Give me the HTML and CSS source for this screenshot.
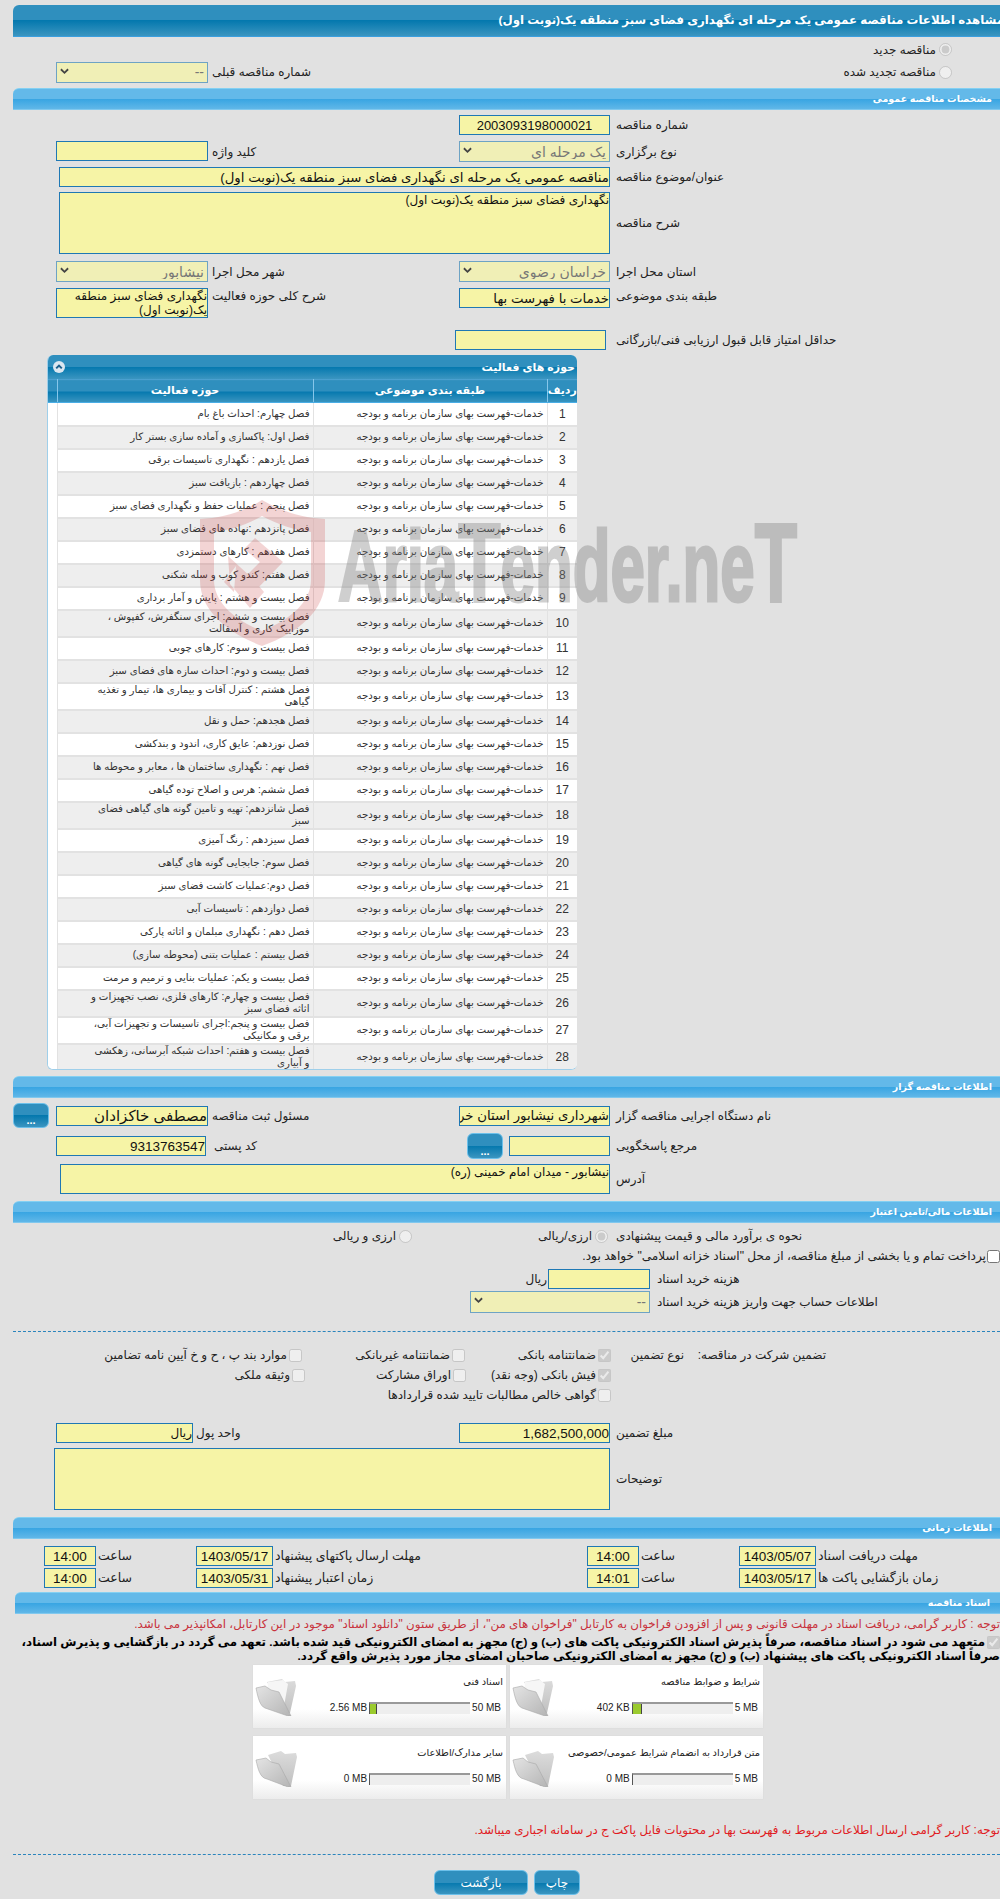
FILE: index.html
```html
<!DOCTYPE html>
<html lang="fa" dir="rtl">
<head>
<meta charset="utf-8">
<title>مشاهده اطلاعات مناقصه</title>
<link rel="stylesheet" href="styles.css">
</head>
<body>
<div class="page">
  <h1 class="title"><span>مشاهده اطلاعات مناقصه عمومی یک مرحله ای نگهداری فضای سبز منطقه یک(نوبت اول)</span></h1>

  <div class="opt-a"><label class="radio"><input type="radio" name="n" checked disabled>مناقصه جدید</label></div>
  <div class="grid opt-b">
    <div class="sel a w152"><select disabled><option>--</option></select><svg class="chev" viewBox="0 0 10 7"><path d="M1 1l4 4 4-4" fill="none" stroke="#444" stroke-width="2"/></svg></div>
    <span class="lbl b">شماره مناقصه قبلی</span>
    <label class="radio c-radio"><input type="radio" name="n" disabled>مناقصه تجدید شده</label>
  </div>

  <h2 class="sec s1">مشخصات مناقصه عمومی</h2>

  <div class="grid r h20 mt5">
    <input class="c" type="text" value="2003093198000021" dir="ltr" readonly>
    <span class="lbl d">شماره مناقصه</span>
  </div>
  <div class="grid r h21 mt6">
    <input class="a w152 top" type="text" readonly>
    <span class="lbl b">کلید واژه</span>
    <div class="sel c"><select disabled><option>یک مرحله ای</option></select><svg class="chev" viewBox="0 0 10 7"><path d="M1 1l4 4 4-4" fill="none" stroke="#444" stroke-width="2"/></svg></div>
    <span class="lbl d">نوع برگزاری</span>
  </div>
  <div class="grid r h20 mt5">
    <input class="wide big" type="text" value="مناقصه عمومی یک مرحله ای نگهداری فضای سبز منطقه یک(نوبت اول)" readonly>
    <span class="lbl d">عنوان/موضوع مناقصه</span>
  </div>
  <div class="grid r h62 mt5">
    <textarea class="wide" readonly>نگهداری فضای سبز منطقه یک(نوبت اول)</textarea>
    <span class="lbl d">شرح مناقصه</span>
  </div>
  <div class="grid r h21 mt7">
    <div class="sel a w152"><select disabled><option>نیشابور</option></select><svg class="chev" viewBox="0 0 10 7"><path d="M1 1l4 4 4-4" fill="none" stroke="#444" stroke-width="2"/></svg></div>
    <span class="lbl b">شهر محل اجرا</span>
    <div class="sel c"><select disabled><option>خراسان رضوی</option></select><svg class="chev" viewBox="0 0 10 7"><path d="M1 1l4 4 4-4" fill="none" stroke="#444" stroke-width="2"/></svg></div>
    <span class="lbl d">استان محل اجرا</span>
  </div>
  <div class="grid r h30 mt6 align-top">
    <textarea class="a w152 h30" readonly>نگهداری فضای سبز منطقه یک(نوبت اول)</textarea>
    <span class="lbl b top-lbl">شرح کلی حوزه فعالیت</span>
    <input class="c big" type="text" value="خدمات با فهرست بها" readonly>
    <span class="lbl d top-lbl">طبقه بندی موضوعی</span>
  </div>
  <div class="grid r h20 mt12">
    <input class="c shift" type="text" readonly>
    <span class="lbl d">حداقل امتیاز قابل قبول ارزیابی فنی/بازرگانی</span>
  </div>

  <section class="panel">
    <div class="panel-head">
      <span>حوزه های فعالیت</span>
      <svg class="toggle" viewBox="0 0 12 12"><circle cx="6" cy="6" r="6" fill="#dbe6f0"/><path d="M3.2 7.4L6 4.6l2.8 2.8" fill="none" stroke="#1c5f8c" stroke-width="2"/></svg>
    </div>
    <table class="list">
      <colgroup><col class="c1"><col class="c2"><col class="c3"><col class="c4"></colgroup>
      <thead><tr><th>ردیف</th><th>طبقه بندی موضوعی</th><th>حوزه فعالیت</th><th></th></tr></thead>
      <tbody>
        <tr><td class="n">1</td><td>خدمات-فهرست بهای سازمان برنامه و بودجه</td><td>فصل چهارم: احداث باغ بام</td><td class="e"></td></tr>
        <tr><td class="n">2</td><td>خدمات-فهرست بهای سازمان برنامه و بودجه</td><td>فصل اول:  پاکسازی و آماده سازی بستر کار</td><td class="e"></td></tr>
        <tr><td class="n">3</td><td>خدمات-فهرست بهای سازمان برنامه و بودجه</td><td>فصل یازدهم : نگهداری تاسیسات برقی</td><td class="e"></td></tr>
        <tr><td class="n">4</td><td>خدمات-فهرست بهای سازمان برنامه و بودجه</td><td>فصل چهاردهم : بازیافت سبز</td><td class="e"></td></tr>
        <tr><td class="n">5</td><td>خدمات-فهرست بهای سازمان برنامه و بودجه</td><td>فصل پنجم : عملیات حفظ و نگهداری فضای سبز</td><td class="e"></td></tr>
        <tr><td class="n">6</td><td>خدمات-فهرست بهای سازمان برنامه و بودجه</td><td>فصل پانزدهم :نهاده های فضای سبز</td><td class="e"></td></tr>
        <tr><td class="n">7</td><td>خدمات-فهرست بهای سازمان برنامه و بودجه</td><td>فصل هفدهم : کارهای دستمزدی</td><td class="e"></td></tr>
        <tr><td class="n">8</td><td>خدمات-فهرست بهای سازمان برنامه و بودجه</td><td>فصل هفتم: کندو کوب و سله شکنی</td><td class="e"></td></tr>
        <tr><td class="n">9</td><td>خدمات-فهرست بهای سازمان برنامه و بودجه</td><td>فصل بیست و هشتم : پایش و آمار برداری</td><td class="e"></td></tr>
        <tr class="tall"><td class="n">10</td><td>خدمات-فهرست بهای سازمان برنامه و بودجه</td><td>فصل بیست و ششم: اجرای سنگفرش، کفپوش ،<br>موزاییک کاری و آسفالت</td><td class="e"></td></tr>
        <tr><td class="n">11</td><td>خدمات-فهرست بهای سازمان برنامه و بودجه</td><td>فصل بیست و سوم: کارهای چوبی</td><td class="e"></td></tr>
        <tr><td class="n">12</td><td>خدمات-فهرست بهای سازمان برنامه و بودجه</td><td>فصل بیست و دوم: احداث سازه های فضای سبز</td><td class="e"></td></tr>
        <tr class="tall"><td class="n">13</td><td>خدمات-فهرست بهای سازمان برنامه و بودجه</td><td>فصل هشتم : کنترل آفات و بیماری ها، تیمار و تغذیه<br>گیاهی</td><td class="e"></td></tr>
        <tr><td class="n">14</td><td>خدمات-فهرست بهای سازمان برنامه و بودجه</td><td>فصل هجدهم: حمل و نقل</td><td class="e"></td></tr>
        <tr><td class="n">15</td><td>خدمات-فهرست بهای سازمان برنامه و بودجه</td><td>فصل نوزدهم: عایق کاری، اندود و بندکشی</td><td class="e"></td></tr>
        <tr><td class="n">16</td><td>خدمات-فهرست بهای سازمان برنامه و بودجه</td><td>فصل نهم : نگهداری ساختمان ها ، معابر و محوطه ها</td><td class="e"></td></tr>
        <tr><td class="n">17</td><td>خدمات-فهرست بهای سازمان برنامه و بودجه</td><td>فصل ششم: هرس و اصلاح توده گیاهی</td><td class="e"></td></tr>
        <tr class="tall"><td class="n">18</td><td>خدمات-فهرست بهای سازمان برنامه و بودجه</td><td>فصل شانزدهم: تهیه و تامین گونه های گیاهی فضای<br>سبز</td><td class="e"></td></tr>
        <tr><td class="n">19</td><td>خدمات-فهرست بهای سازمان برنامه و بودجه</td><td>فصل سیزدهم : رنگ آمیزی</td><td class="e"></td></tr>
        <tr><td class="n">20</td><td>خدمات-فهرست بهای سازمان برنامه و بودجه</td><td>فصل سوم: جابجایی گونه های گیاهی</td><td class="e"></td></tr>
        <tr><td class="n">21</td><td>خدمات-فهرست بهای سازمان برنامه و بودجه</td><td>فصل دوم:عملیات کاشت فضای سبز</td><td class="e"></td></tr>
        <tr><td class="n">22</td><td>خدمات-فهرست بهای سازمان برنامه و بودجه</td><td>فصل دوازدهم : تاسیسات آبی</td><td class="e"></td></tr>
        <tr><td class="n">23</td><td>خدمات-فهرست بهای سازمان برنامه و بودجه</td><td>فصل دهم : نگهداری مبلمان و اثاثه پارکی</td><td class="e"></td></tr>
        <tr><td class="n">24</td><td>خدمات-فهرست بهای سازمان برنامه و بودجه</td><td>فصل بیستم : عملیات بتنی (محوطه سازی)</td><td class="e"></td></tr>
        <tr><td class="n">25</td><td>خدمات-فهرست بهای سازمان برنامه و بودجه</td><td>فصل بیست و یکم: عملیات بنایی و ترمیم و مرمت</td><td class="e"></td></tr>
        <tr class="tall"><td class="n">26</td><td>خدمات-فهرست بهای سازمان برنامه و بودجه</td><td>فصل بیست و چهارم: کارهای فلزی، نصب تجهیزات و<br>اثاثه فضای سبز</td><td class="e"></td></tr>
        <tr class="tall"><td class="n">27</td><td>خدمات-فهرست بهای سازمان برنامه و بودجه</td><td>فصل بیست و پنجم:اجرای تاسیسات و تجهیزات آبی،<br>برقی و مکانیکی</td><td class="e"></td></tr>
        <tr class="tall"><td class="n">28</td><td>خدمات-فهرست بهای سازمان برنامه و بودجه</td><td>فصل بیست و هفتم: احداث شبکه آبرسانی، زهکشی<br>و آبیاری</td><td class="e"></td></tr>
      </tbody>
    </table>
  </section>

  <h2 class="sec mt6">اطلاعات مناقصه گزار</h2>
  <div class="grid r h25 mt5">
    <div class="a with-btn"><button class="dots" type="button">...</button><input class="w152 person" type="text" value="مصطفی خاکزادان" readonly></div>
    <span class="lbl b">مسئول ثبت مناقصه</span>
    <input class="c big" type="text" value="شهرداری نیشابور استان خراسان رضوی" readonly>
    <span class="lbl d">نام دستگاه اجرایی مناقصه گزار</span>
  </div>
  <div class="grid r h26 mt5">
    <input class="a w150 num" type="text" value="9313763547" readonly>
    <span class="lbl b pad">کد پستی</span>
    <div class="c with-btn2"><button class="dots" type="button">...</button><input type="text" readonly></div>
    <span class="lbl d">مرجع پاسخگویی</span>
  </div>
  <div class="grid r h30 mt5">
    <textarea class="wide2 h30" readonly>نیشابور - میدان امام خمینی (ره)</textarea>
    <span class="lbl d">آدرس</span>
  </div>

  <h2 class="sec mt7">اطلاعات مالی/تامین اعتبار</h2>
  <div class="fin-radio">
    <div class="fin-opts">
      <label class="radio w196"><input type="radio" name="f" checked disabled>ارزی/ریالی</label>
      <label class="radio"><input type="radio" name="f" disabled>ارزی و ریالی</label>
    </div>
    <span class="lbl">نحوه ی برآورد مالی و قیمت پیشنهادی</span>
  </div>
  <label class="pay"><input type="checkbox">پرداخت تمام و یا بخشی از مبلغ مناقصه، از محل "اسناد خزانه اسلامی" خواهد بود.</label>
  <div class="fin r h20 mt3">
    <span class="rial">ریال</span>
    <input class="fee" type="text" readonly>
    <span class="lbl">هزینه خرید اسناد</span>
  </div>
  <div class="fin r h22 mt2">
    <div class="sel acc"><select disabled><option>--</option></select><svg class="chev" viewBox="0 0 10 7"><path d="M1 1l4 4 4-4" fill="none" stroke="#444" stroke-width="2"/></svg></div>
    <span class="lbl">اطلاعات حساب جهت واریز هزینه خرید اسناد</span>
  </div>
  <hr class="dash d1">

  <div class="g-row mt13">
    <span class="g-lbl">تضمین شرکت در مناقصه:</span>
    <span class="g-type">نوع تضمین</span>
    <label class="chk g1"><input type="checkbox" checked disabled>ضمانتنامه بانکی</label>
    <label class="chk g2"><input type="checkbox" disabled>ضمانتنامه غیربانکی</label>
    <label class="chk"><input type="checkbox" disabled>موارد بند پ ، ح و خ آیین نامه تضامین</label>
  </div>
  <div class="g-row">
    <span class="g-pad"></span>
    <label class="chk g1b"><input type="checkbox" checked disabled>فیش بانکی (وجه نقد)</label>
    <label class="chk g2b"><input type="checkbox" disabled>اوراق مشارکت</label>
    <label class="chk"><input type="checkbox" disabled>وثیقه ملکی</label>
  </div>
  <div class="g-row">
    <span class="g-pad"></span>
    <label class="chk"><input type="checkbox" disabled>گواهی خالص مطالبات تایید شده قراردادها</label>
  </div>

  <div class="grid r h20 mt18">
    <input class="a w137" type="text" value="ریال" readonly>
    <span class="lbl b tight">واحد پول</span>
    <input class="c num" type="text" value="1,682,500,000" dir="ltr" readonly>
    <span class="lbl d">مبلغ تضمین</span>
  </div>
  <div class="grid r h62 mt5">
    <textarea class="wide3" readonly></textarea>
    <span class="lbl d">توضیحات</span>
  </div>

  <h2 class="sec mt7">اطلاعات زمانی</h2>
  <div class="dates mt7">
    <input class="num" type="text" value="14:00" dir="ltr" readonly><span class="lbl">ساعت</span>
    <input class="num" type="text" value="1403/05/17" dir="ltr" readonly><span class="lbl">مهلت ارسال پاکتهای پیشنهاد</span>
    <input class="num" type="text" value="14:00" dir="ltr" readonly><span class="lbl">ساعت</span>
    <input class="num" type="text" value="1403/05/07" dir="ltr" readonly><span class="lbl">مهلت دریافت اسناد</span>
  </div>
  <div class="dates mt2">
    <input class="num" type="text" value="14:00" dir="ltr" readonly><span class="lbl">ساعت</span>
    <input class="num" type="text" value="1403/05/31" dir="ltr" readonly><span class="lbl">زمان اعتبار پیشنهاد</span>
    <input class="num" type="text" value="14:01" dir="ltr" readonly><span class="lbl">ساعت</span>
    <input class="num" type="text" value="1403/05/17" dir="ltr" readonly><span class="lbl">زمان بازگشایی پاکت ها</span>
  </div>

  <h2 class="sec sec-in mt4">اسناد مناقصه</h2>
  <p class="note-red">توجه : کاربر گرامی، دریافت اسناد در مهلت قانونی و پس از افزودن فراخوان به کارتابل "فراخوان های من"، از طریق ستون "دانلود اسناد" موجود در این کارتابل، امکانپذیر می باشد.</p>
  <p class="commit"><input type="checkbox" checked disabled>متعهد می شود در اسناد مناقصه، صرفاً پذیرش اسناد الکترونیکی پاکت های (ب) و (ج) مجهز به امضای الکترونیکی قید شده باشد. تعهد می گردد در بازگشایی و پذیرش اسناد،<br>صرفاً اسناد الکترونیکی پاکت های پیشنهاد (ب) و (ج) مجهز به امضای الکترونیکی صاحبان امضای مجاز مورد پذیرش واقع گردد.</p>

  <div class="cards">
    <article class="card">
      <div class="card-main">
        <div class="card-title">شرایط و ضوابط مناقصه</div>
        <div class="prog"><span dir="ltr">5 MB</span><span class="bar"><i style="width:9px"></i></span><span dir="ltr">402 KB</span></div>
      </div>
      <svg class="folder" viewBox="0 0 42 38"><use href="#folder"/></svg>
    </article>
    <article class="card">
      <div class="card-main">
        <div class="card-title">اسناد فنی</div>
        <div class="prog"><span dir="ltr">50 MB</span><span class="bar"><i style="width:7px"></i></span><span dir="ltr">2.56 MB</span></div>
      </div>
      <svg class="folder" viewBox="0 0 42 38"><use href="#folder"/></svg>
    </article>
    <article class="card">
      <div class="card-main">
        <div class="card-title">متن قرارداد به انضمام شرایط عمومی/خصوصی</div>
        <div class="prog"><span dir="ltr">5 MB</span><span class="bar"></span><span dir="ltr">0 MB</span></div>
      </div>
      <svg class="folder" viewBox="0 0 42 38"><use href="#folder2"/></svg>
    </article>
    <article class="card">
      <div class="card-main">
        <div class="card-title">سایر مدارک/اطلاعات</div>
        <div class="prog"><span dir="ltr">50 MB</span><span class="bar"></span><span dir="ltr">0 MB</span></div>
      </div>
      <svg class="folder" viewBox="0 0 42 38"><use href="#folder2"/></svg>
    </article>
  </div>

  <p class="note-red2">توجه: کاربر گرامی ارسال اطلاعات مربوط به فهرست بها در محتویات فایل پاکت ج در سامانه اجباری میباشد.</p>
  <hr class="dash d2">
  <div class="actions">
    <button class="act print" type="button">چاپ</button>
    <button class="act back" type="button">بازگشت</button>
  </div>
</div>

<div class="wm" aria-hidden="true">
  <svg class="wm-shield" viewBox="0 0 125 146">
    <path fill="#cc4040" fill-rule="evenodd" d="M62 0C82 12 104 18 125 19V80C125 110 100 132 62 146C26 132 0 110 0 80V19C22 18 43 12 62 0ZM62 16C46 25 30 30 14 32V80C14 102 34 120 62 131C90 120 111 102 111 80V32C95 30 79 25 62 16Z"/>
    <path fill="#cc4040" d="M55 38L83 62 56 90 44 78 60 62 44 49ZM28 56L52 78 64 92 50 108 40 96 30 84ZM36 66L24 82 34 92Z"/>
  </svg>
  <span class="wm-text">Aria<b>T</b>ender.ne<b>T</b></span>
</div>

<svg class="defs" width="0" height="0">
  <defs>
    <linearGradient id="fg" x1="0" y1="0" x2="1" y2="1"><stop offset="0" stop-color="#e4e4e4"/><stop offset="1" stop-color="#b4b4b4"/></linearGradient>
    <linearGradient id="bk" x1="0" y1="0" x2="0" y2="1"><stop offset="0" stop-color="#dcdcdc"/><stop offset="1" stop-color="#c0c0c0"/></linearGradient>
    <g id="folder">
      <path fill="url(#bk)" d="M12 4L27 1l3 3 10-1 1 5-6 27-4 0Z"/>
      <path fill="#f6f6f6" d="M13 4l15-2 5 4-4 22-8-10-9-2Z"/>
      <path fill="url(#fg)" stroke="#a8a8a8" stroke-width=".6" d="M1 10l9-2 6 4 8 2 12 24-1 0-2 0-23-8C5 28 3 20 1 10Z"/>
    </g>
    <g id="folder2">
      <path fill="url(#bk)" d="M13 6L26 2l4 3 11-1 1 4-6 29-8 0Z"/>
      <path fill="url(#fg)" stroke="#a8a8a8" stroke-width=".6" d="M1 11l10-2 5 4 8 2 12 23-3 0-21-8C5 29 3 20 1 11Z"/>
    </g>
  </defs>
</svg>
</body>
</html>
```
FILE: styles.css
```css
* { box-sizing: border-box; }
html, body { margin: 0; padding: 0; }
html { overflow: hidden; }
body {
  position: relative;
  width: 1000px;
  height: 1899px;
  overflow: hidden;
  background: #e1e1e1;
  color: #222;
  direction: rtl;
  font: 12px/14px "Liberation Sans", "DejaVu Sans", sans-serif;
}
.page { padding: 5px 0 0 13px; }

/* headings */
.title {
  margin: 0;
  height: 32px;
  overflow: hidden;
  border-radius: 6px 0 0 0;
  border-bottom: 1px solid #3a9fdf;
  background: linear-gradient(#2f8fbe 0, #2f8fbe 50%, #0478ae 50%, #3b95c0 100%);
  color: #fff;
  font-size: 11.8px;
  line-height: 31px;
  font-weight: bold;
  white-space: nowrap;
}
.title span { display: block; margin-right: -4px; }
.sec {
  margin: 0;
  height: 22px;
  padding-right: 8px;
  border-radius: 6px 0 0 0;
  border-top: 1px solid #84d0f2;
  border-bottom: 1px solid #80c8ee;
  background: linear-gradient(#63b9e9 0, #63b9e9 48%, #36a4e2 48%, #60b7e8 100%);
  color: #fff;
  font-size: 9.5px;
  line-height: 20px;
  font-weight: bold;
}
.s1 { margin-top: 5px; }
.sec-in { margin-left: 2px; padding-right: 10px; }

/* spacing */
.mt2 { margin-top: 2px; } .mt3 { margin-top: 3px; } .mt4 { margin-top: 4px; }
.mt5 { margin-top: 5px; } .mt6 { margin-top: 6px; } .mt7 { margin-top: 7px; }
.mt12 { margin-top: 12px; } .mt13 { margin-top: 13px; } .mt18 { margin-top: 18px; }
.h20 { height: 20px; } .h21 { height: 21px; } .h22 { height: 22px; } .h25 { height: 25px; }
.h26 { height: 26px; } .h30 { height: 30px; } .h62 { height: 62px; }

/* form controls */
input[type=text], textarea, select {
  margin: 0;
  padding: 0;
  border: 1px solid #1f78b4;
  border-radius: 0;
  background: #f6f4a6;
  color: #111;
  font: 12px/14px "Liberation Sans", "DejaVu Sans", sans-serif;
  outline: 0;
  resize: none;
  overflow: hidden;
}
input[type=text] { height: 20px; }
textarea { display: block; }
input[type=text].big { font-size: 13.3px; }
input[type=text].person { font-size: 15px; }
input[type=text].num { font-size: 13.5px; }
select {
  appearance: none;
  width: 100%;
  height: 100%;
  padding: 0 3px;
  border-color: #6ea3c4;
  background: #f0efb6;
  color: #777;
  font-size: 14px;
  opacity: 1;
}
.sel { position: relative; height: 21px; }
.chev { position: absolute; left: 4px; top: 6px; width: 9px; height: 7px; }
input[dir=ltr] { text-align: right; }
input[value="2003093198000021"] { text-align: center; font-size: 13px; }
input[type=radio], input[type=checkbox] { margin: 0; }

/* grid of the main form */
.grid {
  display: grid;
  grid-template-columns: 199px 247px 157px 1fr;
  grid-template-rows: 1fr;
  direction: ltr;
  align-items: center;
}
.grid > * { grid-row: 1; }
.grid .lbl, .fin .lbl, .dates .lbl, .fin-radio .lbl { direction: rtl; text-align: left; white-space: nowrap; }
.grid .a { grid-column: 1; justify-self: end; margin-right: 4px; direction: rtl; }
.grid .b { grid-column: 2; }
.grid .c { grid-column: 3; width: 151px; direction: rtl; }
.grid .d { grid-column: 4; }
.w152 { width: 152px; }
.w150 { width: 150px; margin-right: 6px !important; }
.w137 { width: 137px; margin-right: 19px !important; }
.pad { padding-left: 2px; }
.grid .tight { margin-left: -16px; }
.grid .wide { grid-column: 1 / 4; margin: 0 6px 0 46px; width: 551px; direction: rtl; height: 100%; }
.grid .wide2 { grid-column: 1 / 4; margin: 0 6px 0 47px; width: 550px; direction: rtl; }
.grid .wide3 { grid-column: 1 / 4; margin: 0 6px 0 41px; width: 556px; direction: rtl; height: 100%; }
.align-top { align-items: start; }
.align-top .top-lbl { padding-top: 1px; }
.grid .shift { margin-left: -4px; }
.top { align-self: start; }
.opt-a { height: 19px; margin-top: 3px; padding-right: 48px; display: flex; align-items: center; }
.opt-b { height: 22px; margin-top: 2px; }
.grid .c-radio { grid-column: 3 / 5; direction: rtl; justify-self: end; margin-right: 48px; }
.radio, .chk { display: inline-flex; align-items: center; gap: 3px; white-space: nowrap; }
.chk { gap: 2px; }
.grid .with-btn { display: flex; direction: ltr; justify-content: space-between; align-items: center; width: 195px; margin-right: 4px; }
.grid .with-btn2 { display: flex; direction: ltr; justify-content: space-between; align-items: center; height: 26px; margin-left: 8px; width: 143px; }
.with-btn input { direction: rtl; }
.with-btn2 input { width: 101px; direction: rtl; }
.dots {
  width: 36px;
  height: 25px;
  padding: 9px 0 0;
  border: 1px solid #6cc0ea;
  border-radius: 6px;
  background: linear-gradient(#2f8fbe 0, #2f8fbe 50%, #0478ae 50%, #3b95c0 100%);
  color: #fff;
  font: bold 11px/12px "Liberation Sans", sans-serif;
}
.with-btn2 .dots { height: 26px; }

/* panel + table */
.panel {
  height: 715px;
  width: 530px;
  margin: 5px 0 0 0;
  margin-right: auto;
  margin-left: 34px;
  overflow: hidden;
  border-radius: 6px;
  border-left: 1px solid #9fcfea;
  border-bottom: 1px solid #9fcfea;
  background: #fff;
}
.panel-head {
  display: flex;
  justify-content: space-between;
  align-items: center;
  height: 24px;
  padding: 0 2px 0 5px;
  background: linear-gradient(#2f8fbe 0, #2f8fbe 50%, #0478ae 50%, #3b95c0 100%);
  color: #fff;
  font-size: 11px;
  font-weight: bold;
}
.toggle { width: 12px; height: 12px; }
.list { width: 529px; border-collapse: collapse; table-layout: fixed; }
.c1 { width: 30px; } .c2 { width: 234px; } .c3 { width: 256px; } .c4 { width: 9px; }
.list th {
  height: 23px;
  padding: 0 0 3px;
  border-left: 1px solid #86c6ea;
  border-top: 1px solid #4aa0d0;
  border-bottom: 1px solid #4aaee6;
  background: linear-gradient(#2f8fbe 0, #2f8fbe 50%, #0478ae 50%, #3b95c0 100%);
  color: #fff;
  font-size: 11px;
  font-weight: bold;
}
.list th:last-child { border-left: 0; }
.list td {
  height: 23px;
  padding: 0 3px 0 0;
  border-bottom: 2px solid #e2e2e2;
  border-left: 1px solid #e2e2e2;
  background: #fff;
  color: #333;
  font-size: 10.2px;
  line-height: 12.5px;
  white-space: nowrap;
  overflow: hidden;
}
.list tbody tr:nth-child(even) td { background: #eee; }
.list tbody tr td.e { background: #fff; border: 0; }
.list td.n { padding: 0; text-align: center; font-size: 12px; border-right: 0; }
.list tr.tall td { height: 27px; }

/* finance */
.fin-radio { display: grid; grid-template-columns: 603px 1fr; direction: ltr; height: 20px; margin-top: 3px; align-items: center; }
.fin-opts { display: flex; direction: rtl; padding-right: 8px; }
.w196 { width: 196px; }
.pay { display: flex; align-items: center; gap: 1px; height: 20px; font-size: 12.15px; }
.fin { display: grid; grid-template-columns: 535px 109px 1fr; direction: ltr; align-items: center; }
.rial { justify-self: end; direction: rtl; padding-right: 1px; }
.fee { width: 102px; }
.acc { grid-column: 1 / 3; justify-self: end; margin-right: 7px; width: 180px; height: 22px; direction: rtl; }
.fin > .lbl { grid-column: 3; }
.dash { margin: 0; border: 0; border-top: 1px dashed #2a84bc; }
.d1 { margin-top: 18px; }
.d2 { margin-top: 14px; }

/* guarantee */
.g-row { display: flex; width: 813px; margin-right: auto; margin-left: 0; height: 20px; align-items: center; white-space: nowrap; }
.g-lbl { width: 126px; }
.g-type { width: 89px; padding-right: 16px; }
.g-pad { width: 215px; flex: none; }
.g1 { width: 146px; } .g2 { width: 163px; } .g1b { width: 145px; } .g2b { width: 161px; }

/* dates */
.dates {
  display: grid;
  grid-template-columns: 52px 100px 77px 314px 52px 100px 77px 1fr;
  direction: ltr;
  height: 20px;
  padding-left: 31px;
  align-items: center;
}
.dates input { width: 100%; text-align: center !important; }
.dates .lbl { padding-left: 2px; font-size: 12.5px; }

/* documents */
.note-red { margin: 0; height: 21px; font-size: 11.85px; line-height: 21px; color: #c8323c; white-space: nowrap; }
.commit { margin: 0; height: 30px; color: #000; font-size: 11.8px; font-weight: bold; line-height: 14px; white-space: nowrap; }
.commit input { margin-left: 2px; vertical-align: middle; }
.cards {
  display: grid;
  grid-template-columns: 253px 253px;
  grid-auto-rows: 63px;
  gap: 8px 4px;
  width: 510px;
  margin-top: 0;
  margin-right: auto;
  margin-left: 240px;
}
.card {
  display: flex;
  background: linear-gradient(#fff 0, #fff 70%, #ececec 100%);
  box-shadow: 0 0 1px #ccc;
}
.card-main { flex: 1; min-width: 0; padding: 10px 3px 0 0; }
.card-title { height: 20px; font-size: 9.8px; line-height: 14px; color: #222; white-space: nowrap; }
.prog { display: flex; align-items: center; gap: 2px; height: 12px; margin-top: 7px; font-size: 10px; color: #222; white-space: nowrap; padding-right: 2px; }
.bar { display: block; direction: ltr; width: 101px; height: 12px; flex: none; border-top: 2px solid #999; border-left: 1px solid #555; background: #eee; }
.bar i { display: block; height: 10px; background: #9bcb2e; border-right: 1px solid #444; }
.folder { width: 42px; height: 38px; flex: none; margin: 13px 0 0 2px; }
.note-red2 { margin: 0; height: 20px; margin-top: 21px; font-size: 11.85px; line-height: 20px; color: #e01a22; white-space: nowrap; }
.actions { display: flex; gap: 6px; margin-top: 15px; padding-right: 420px; }
.act {
  height: 25px;
  padding: 0;
  border: 1px solid #6cc0ea;
  border-radius: 6px;
  background: linear-gradient(#2f8fbe 0, #2f8fbe 50%, #0478ae 50%, #3b95c0 100%);
  color: #fff;
  font: 12px/14px "Liberation Sans", "DejaVu Sans", sans-serif;
}
.print { width: 46px; }
.back { width: 94px; }

/* watermark */
.wm { position: absolute; left: 200px; top: 500px; width: 610px; height: 150px; pointer-events: none; direction: ltr; }
.wm-shield { position: absolute; left: 0; top: 0; width: 125px; height: 146px; opacity: .22; }
.wm-text {
  position: absolute;
  left: 138px;
  top: 13px;
  font: bold 100px/100px "Liberation Sans", sans-serif;
  color: #7d7d7d;
  opacity: .36;
  white-space: nowrap;
  transform-origin: 0 0;
  transform: scaleX(.618);
  -webkit-text-stroke: 3px #7d7d7d;
}
.wm-text b { font-size: 112px; }
.defs { position: absolute; }
```
